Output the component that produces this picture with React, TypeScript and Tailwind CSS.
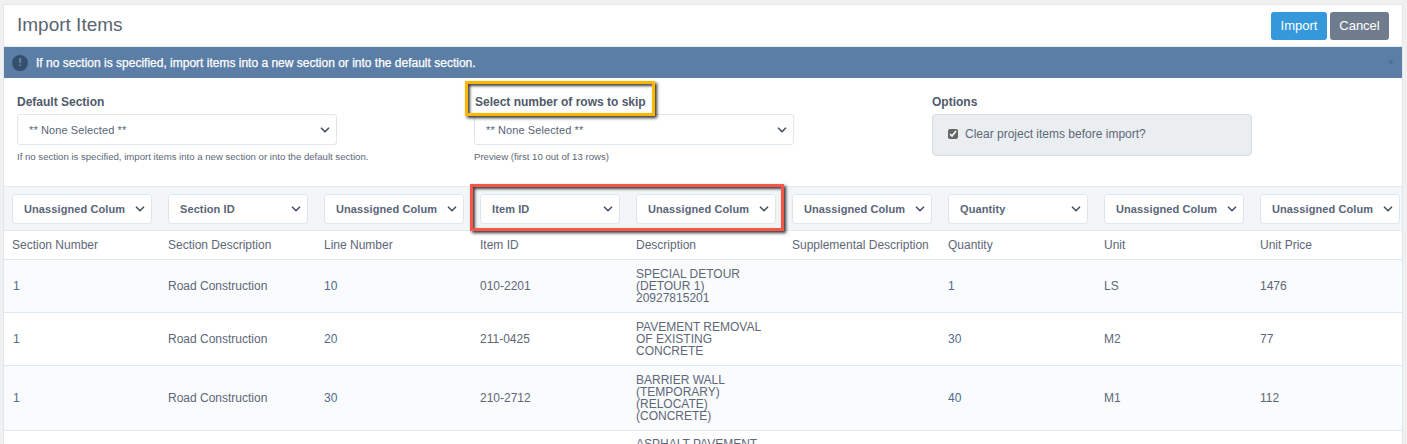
import { ChevronDown } from "lucide-react";

const columnSelects = [
  "Unassigned Colum",
  "Section ID",
  "Unassigned Colum",
  "Item ID",
  "Unassigned Colum",
  "Unassigned Colum",
  "Quantity",
  "Unassigned Colum",
  "Unassigned Colum",
];

const headers = [
  "Section Number",
  "Section Description",
  "Line Number",
  "Item ID",
  "Description",
  "Supplemental Description",
  "Quantity",
  "Unit",
  "Unit Price",
];

const rows = [
  {
    line: "10",
    itemId: "010-2201",
    description: ["SPECIAL DETOUR", "(DETOUR 1)", "20927815201"],
    quantity: "1",
    unit: "LS",
    price: "1476",
    height: "h-[53px]",
    bg: "bg-[#f9fbfd]",
  },
  {
    line: "20",
    itemId: "211-0425",
    description: ["PAVEMENT REMOVAL", "OF EXISTING", "CONCRETE"],
    quantity: "30",
    unit: "M2",
    price: "77",
    height: "h-[53px]",
    bg: "bg-white",
  },
  {
    line: "30",
    itemId: "210-2712",
    description: ["BARRIER WALL", "(TEMPORARY)", "(RELOCATE)", "(CONCRETE)"],
    quantity: "40",
    unit: "M1",
    price: "112",
    height: "h-[65px]",
    bg: "bg-[#f9fbfd]",
  },
];

function SelectBox({ label, bold, className }: { label: string; bold?: boolean; className: string }) {
  return (
    <div
      className={`flex items-center justify-between bg-white border border-[#dfe7ee] rounded-[3px] text-[#5a6578] text-[11px] pl-[11px] pr-[4px] ${className} ${bold ? "font-bold" : ""}`}
    >
      <span className="whitespace-nowrap tracking-[0.1px] pt-[1px]">{label}</span>
      <ChevronDown className="w-[14px] h-[14px] text-[#4d5767]" strokeWidth={3} />
    </div>
  );
}

export default function App() {
  return (
    <div className="relative w-[1407px] h-[444px] overflow-hidden bg-[#f0f0f0] pt-[4px] pl-[3px] font-['Liberation_Sans',Arial,sans-serif] text-[12px] text-[#5d6778]">
      <div className="w-[1400px] bg-white border border-[#dfe8ee]">
        <div className="flex items-center justify-between h-[42px] pl-[13px] pr-[13px] border-b border-[#e8edf1]">
          <h1 className="text-[19px] font-normal text-[#5a6473]">Import Items</h1>
          <div className="flex gap-[3px]">
            <button className="w-[56px] h-[28px] rounded-[3px] bg-[#3498db] text-white text-[13px]">Import</button>
            <button className="w-[59px] h-[28px] rounded-[3px] bg-[#6f7c8e] text-white text-[13px]">Cancel</button>
          </div>
        </div>

        <div className="flex items-center justify-between h-[31px] bg-[#5b7ea6] pl-[8px] pr-[8px] text-white text-[12px]">
          <div className="flex items-center gap-[8px]">
            <span className="flex items-center justify-center w-[16px] h-[16px] rounded-full bg-[#34506f] text-[#7f8ca0] text-[11px] font-bold">!</span>
            <span className="[-webkit-text-stroke:0.25px_white]">If no section is specified, import items into a new section or into the default section.</span>
          </div>
          <span className="text-[11px] text-[#47658a]">×</span>
        </div>

        <div className="flex h-[108px] pl-[13px] pt-[16px]">
          <div className="w-[457px]">
            <div className="font-bold text-[12px] text-[#4f5a6a] leading-[16px] mb-[4px]">Default Section</div>
            <SelectBox label="** None Selected **" className="w-[320px] h-[31px]" />
            <div className="mt-[6px] text-[9.6px] leading-[12px] text-[#5d6778] whitespace-nowrap">If no section is specified, import items into a new section or into the default section.</div>
          </div>
          <div className="w-[458px]">
            <div className="font-bold text-[12px] text-[#4f5a6a] leading-[16px] mb-[4px] pl-[1px]">Select number of rows to skip</div>
            <SelectBox label="** None Selected **" className="w-[320px] h-[31px]" />
            <div className="mt-[6px] text-[9.6px] leading-[12px] text-[#5d6778]">Preview (first 10 out of 13 rows)</div>
          </div>
          <div>
            <div className="font-bold text-[12px] text-[#4f5a6a] leading-[16px] mb-[4px]">Options</div>
            <div className="flex items-start gap-[7px] w-[320px] h-[42px] pl-[15px] pt-[12px] bg-[#ebeef1] border border-[#d5dce2] rounded-[4px]">
              <input type="checkbox" defaultChecked className="w-[10px] h-[10px] mt-[2px] accent-[#666]" />
              <span className="leading-[14px]">Clear project items before import?</span>
            </div>
          </div>
        </div>

        <div className="flex gap-[16px] h-[45px] pt-[7px] pl-[8px] bg-[#f3f6f9] border-y border-[#e3e9ee]">
          {columnSelects.map((label, i) => (
            <SelectBox key={i} label={label} bold className="w-[140px] h-[30px] shrink-0" />
          ))}
        </div>

        <div className="flex h-[29px] items-center pl-[8px] border-b border-[#dfe8ee]">
          {headers.map((h) => (
            <div key={h} className="w-[156px] shrink-0 whitespace-nowrap">{h}</div>
          ))}
        </div>

        {rows.map((row) => (
          <div key={row.line} className={`flex items-center pl-[8px] border-b border-[#dfe8ee] ${row.height} ${row.bg}`}>
            <div className="w-[156px] shrink-0 pl-[1px] text-[#4f6b8e]">1</div>
            <div className="w-[156px] shrink-0">Road Construction</div>
            <div className="w-[156px] shrink-0 text-[#4f6b8e]">{row.line}</div>
            <div className="w-[156px] shrink-0">{row.itemId}</div>
            <div className="w-[156px] shrink-0 leading-[12px]">
              {row.description.map((d) => (
                <div key={d}>{d}</div>
              ))}
            </div>
            <div className="w-[156px] shrink-0" />
            <div className="w-[156px] shrink-0 text-[#4f6b8e]">{row.quantity}</div>
            <div className="w-[156px] shrink-0">{row.unit}</div>
            <div className="w-[156px] shrink-0">{row.price}</div>
          </div>
        ))}

        <div className="pl-[632px] pt-[7px] leading-[12px]">ASPHALT PAVEMENT</div>
      </div>

      <div className="absolute left-[465px] top-[81px] w-[190px] h-[35px] border-[3px] border-[#fcb900] shadow-[2px_2px_3px_rgba(0,0,0,0.8),inset_2px_2px_3px_rgba(0,0,0,0.75)]" />
      <div className="absolute left-[470px] top-[184px] w-[314px] h-[47px] border-[3px] border-[#f9564a] shadow-[2px_2px_3px_rgba(0,0,0,0.8),inset_2px_2px_3px_rgba(0,0,0,0.75)]" />
    </div>
  );
}
